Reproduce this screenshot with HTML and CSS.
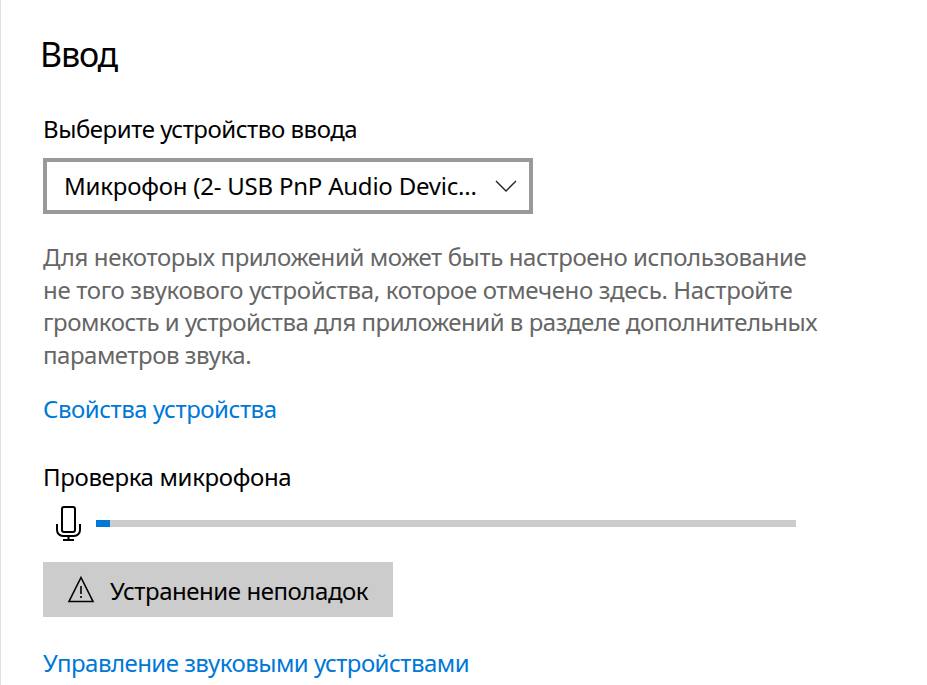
FILE: index.html
```
<!DOCTYPE html>
<html lang="ru">
<head>
  <meta charset="UTF-8" />
  <title>Ввод</title>
  <meta name="viewport" content="width=device-width, initial-scale=1.0" />
  <link rel="stylesheet" href="styles.css">
</head>
<body>

  <main class="settings">
    <h1 class="title">Ввод</h1>

    <h2 class="label device-label" id="device-label">Выберите устройство ввода</h2>
    <button class="select" aria-describedby="device-label">
      <span class="select-text">Микрофон (2- USB PnP Audio Devic...</span>
      <svg class="chevron" viewBox="0 0 22 12" aria-hidden="true">
        <path d="M1 1l10 10L21 1" />
      </svg>
    </button>

    <p class="hint">
      <span class="hint-line">Для некоторых приложений может быть настроено использование</span>
      <span class="hint-line wide">не того звукового устройства, которое отмечено здесь. Настройте</span>
      <span class="hint-line tight">громкость и устройства для приложений в разделе дополнительных</span>
      <span class="hint-line tight">параметров звука.</span>
    </p>

    <a class="link properties" href="#">Свойства устройства</a>

    <h2 class="label test-label">Проверка микрофона</h2>
    <div class="level">
      <svg class="mic" viewBox="0 0 26 36" aria-hidden="true">
        <rect x="7" y="1" width="13" height="25" rx="2" />
        <path d="M2 18v6a6 6 0 0 0 6 6h11a6 6 0 0 0 6-6v-6M13.5 30v4M8 34h11" />
      </svg>
      <div class="meter"><div class="meter-fill"></div></div>
    </div>

    <button class="troubleshoot">
      <svg class="warning" viewBox="0 0 28 28" aria-hidden="true">
        <path d="M14 2.5L26 26.5H2zM14 11v8M14 21v2" />
      </svg>
      <span class="troubleshoot-text">Устранение неполадок</span>
    </button>

    <a class="link manage" href="#">Управление звуковыми устройствами</a>
  </main>

</body>
</html>
```
FILE: styles.css
```
* {
  box-sizing: border-box;
  margin: 0;
  padding: 0;
}

body {
  background: #fff;
  color: #000;
  font-family: 'Noto Sans', 'Open Sans', sans-serif;
  font-size: 24px;
  line-height: 33px;
  overflow: hidden;
}

.settings {
  display: flex;
  flex-direction: column;
  align-items: flex-start;
  height: 685px;
  padding: 30px 0 0 42px;
  border-left: 1px solid #e0e0e0;
  white-space: nowrap;
}

.title {
  margin-left: -3px;
  font-size: 34px;
  font-weight: 400;
  line-height: 48px;
  letter-spacing: -1.2px;
}

.label {
  font-size: 24px;
  font-weight: 400;
}

.device-label {
  margin-top: 34px;
  letter-spacing: -0.45px;
}

.select {
  display: flex;
  align-items: center;
  justify-content: space-between;
  width: 490px;
  height: 56px;
  margin-top: 13px;
  padding: 0 12px 0 17px;
  border: 4px solid #999;
  background: #fff;
  color: #000;
  font: inherit;
}

.select-text {
  padding-bottom: 2px;
  letter-spacing: -0.22px;
}

.chevron {
  width: 22px;
  height: 12px;
  fill: none;
  stroke: #222;
  stroke-width: 1.4;
}

.hint {
  margin-top: 27px;
  color: #666;
  line-height: 32.67px;
  letter-spacing: -0.4px;
}

.hint-line {
  display: block;
}

.wide {
  letter-spacing: -0.35px;
}

.tight {
  letter-spacing: -0.48px;
}

.link {
  color: #0078d7;
  text-decoration: none;
}

.properties {
  margin-top: 20px;
  letter-spacing: -0.46px;
}

.test-label {
  margin-top: 35px;
  letter-spacing: -0.35px;
}

.level {
  display: flex;
  align-items: center;
  height: 36px;
  margin: 13px 0 0 12px;
}

.mic {
  width: 26px;
  height: 36px;
  fill: none;
  stroke: #000;
  stroke-width: 2;
}

.meter {
  width: 700px;
  height: 7px;
  margin-left: 15px;
  background: #ccc;
}

.meter-fill {
  width: 14px;
  height: 100%;
  background: #0078d7;
}

.troubleshoot {
  display: flex;
  align-items: center;
  width: 350px;
  height: 55px;
  margin-top: 20px;
  padding-left: 24px;
  border: 0;
  background: #ccc;
  color: #000;
  font: inherit;
}

.warning {
  width: 28px;
  height: 28px;
  margin-right: 15px;
  fill: none;
  stroke: #000;
  stroke-width: 1.6;
}

.troubleshoot-text {
  padding-top: 2px;
  letter-spacing: -0.45px;
}

.manage {
  margin-top: 29px;
  letter-spacing: -0.53px;
}
```
